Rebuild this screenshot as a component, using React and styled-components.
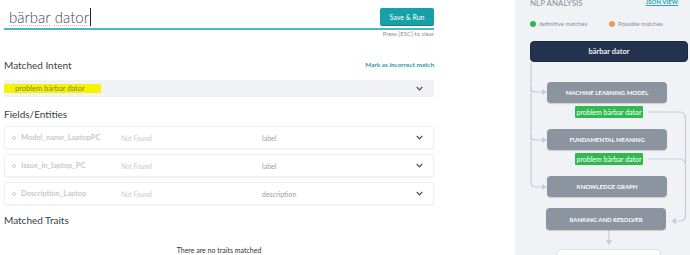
import React from "react";
import styled, { createGlobalStyle } from "styled-components";

const Global = createGlobalStyle`
  html, body { margin: 0; padding: 0; background: #fff; }
  body { font-family: Lato, "Noto Sans", sans-serif; overflow: hidden; }
  * { box-sizing: border-box; }
`;

const Page = styled.div`
  display: flex;
  width: 690px;
  height: 255px;
  overflow: hidden;
`;

const Main = styled.div`
  width: 515px;
  padding: 0 81px 0 4px;
  display: flex;
  flex-direction: column;
`;

const SearchRow = styled.div`
  height: 31px;
  display: flex;
  align-items: flex-start;
  justify-content: space-between;
  border-bottom: 2px solid #4db8c0;
  padding-left: 5px;
`;

const Query = styled.div`
  margin-top: 8px;
  height: 18px;
  font-size: 15px;
  line-height: 18px;
  font-weight: 300;
  color: #3d4858;
  display: flex;
  align-items: center;
`;

const Word = styled.span`
  text-decoration: underline dotted rgba(226, 90, 90, 0.55);
  text-decoration-thickness: 1px;
  text-underline-offset: 2px;
`;

const Caret = styled.span`
  display: inline-block;
  width: 1px;
  height: 18px;
  background: #222;
  margin-left: 1px;
`;

const RunButton = styled.button`
  margin-top: 8px;
  width: 54px;
  height: 17px;
  border: none;
  border-radius: 2px;
  background: #17a0a8;
  box-shadow: 0 1px 0 #10818a;
  color: #fff;
  font-family: Lato, sans-serif;
  font-size: 7px;
  padding: 0;
`;

const Hint = styled.div`
  text-align: right;
  font-size: 6px;
  color: #8a8f95;
  line-height: 8px;
`;

const SectionHead = styled.div`
  display: flex;
  justify-content: space-between;
  align-items: center;
  margin-top: ${(p) => p.$top}px;
  height: 12px;
`;

const Title = styled.div`
  font-size: 10px;
  color: #38404a;
  line-height: 12px;
`;

const LinkSmall = styled.a`
  font-size: 6.4px;
  font-weight: 700;
  color: #1f9aa3;
  text-decoration: none;
`;

const IntentBar = styled.div`
  margin-top: 9px;
  height: 18px;
  background: #f1f2f4;
  display: flex;
  align-items: center;
  justify-content: space-between;
  padding-right: 11px;
`;

const Highlight = styled.span`
  background: #f4f400;
  font-size: 7.5px;
  color: #80805a;
  height: 9px;
  line-height: 9px;
  padding: 0 16px 0 11px;
`;

const Chevron = () => (
  <svg width="7" height="5" viewBox="0 0 7 5">
    <polyline points="0.8,1 3.5,3.8 6.2,1" fill="none" stroke="#4a4f56" strokeWidth="1.2" />
  </svg>
);

const FieldList = styled.div`
  display: flex;
  flex-direction: column;
  gap: 5px;
  margin-top: 6px;
`;

const FieldRow = styled.div`
  height: 23px;
  background: #fff;
  border: 1px solid #f0f1f2;
  border-radius: 2px;
  box-shadow: 0 1px 2px rgba(0, 0, 0, 0.06);
  display: flex;
  align-items: center;
  padding-left: 7px;
  padding-right: 10px;
`;

const Dot = styled.span`
  width: 4px;
  height: 4px;
  border-radius: 50%;
  border: 1px solid #c9cdd2;
  margin-right: 5px;
`;

const FieldName = styled.span`
  width: 100px;
  font-size: 7.5px;
  font-weight: 700;
  color: #c6cacf;
`;

const NotFound = styled.span`
  width: 141px;
  font-size: 7px;
  font-style: italic;
  color: #c7cacf;
`;

const FieldType = styled.span`
  flex: 1;
  font-size: 7px;
  color: #9aa0a7;
`;

const Empty = styled.div`
  text-align: center;
  font-size: 7px;
  line-height: 9px;
  color: #333;
  margin-top: 20px;
`;

const Panel = styled.div`
  width: 175px;
  background: #f1f2f5;
  padding: 0 2px 0 15px;
  display: flex;
  flex-direction: column;
`;

const PanelHead = styled.div`
  display: flex;
  justify-content: space-between;
  align-items: flex-start;
  padding-right: 10px;
  margin-top: -2px;
  height: 10px;
`;

const PanelTitle = styled.div`
  font-size: 8px;
  color: #8b9097;
  line-height: 10px;
`;

const JsonLink = styled.a`
  font-size: 6px;
  font-weight: 700;
  color: #2aa7b0;
  text-decoration: underline;
  line-height: 7px;
`;

const Legend = styled.div`
  display: flex;
  align-items: center;
  margin-top: 12px;
  height: 8px;
`;

const LegendItem = styled.div`
  display: flex;
  align-items: center;
  gap: 3px;
  font-size: 6px;
  color: #8b9097;
  width: ${(p) => p.$w}px;
`;

const LegendDot = styled.span`
  width: 6px;
  height: 6px;
  border-radius: 50%;
  background: ${(p) => p.$c};
`;

const Flow = styled.div`
  position: relative;
  width: 158px;
  margin-top: 14px;
  display: flex;
  flex-direction: column;
  align-items: flex-start;
`;

const Lines = styled.svg`
  position: absolute;
  left: 0;
  top: 0;
  overflow: visible;
  pointer-events: none;
`;

const QueryNode = styled.div`
  width: 158px;
  height: 21px;
  background: #24334d;
  border: 1px solid #1b2840;
  border-radius: 4px;
  color: #fff;
  font-size: 7.5px;
  font-weight: 600;
  display: flex;
  align-items: center;
  justify-content: center;
  position: relative;
`;

const Stage = styled.div`
  position: relative;
  width: 120px;
  height: ${(p) => p.$h || 21}px;
  margin-top: ${(p) => p.$top}px;
  margin-left: ${(p) => p.$left || 17}px;
  background: #8c959f;
  border-radius: 4px;
  box-shadow: 0 1px 1px rgba(0, 0, 0, 0.15);
  color: #fff;
  font-size: 6px;
  font-weight: 700;
  text-transform: uppercase;
  display: flex;
  align-items: center;
  justify-content: center;
`;

const Tag = styled.div`
  position: relative;
  margin-top: 3px;
  margin-left: 45px;
  width: 68px;
  height: 12px;
  background: #2fba4f;
  border-radius: 1px;
  color: #fff;
  font-size: 7px;
  display: flex;
  align-items: center;
  justify-content: center;
`;

const Output = styled.div`
  margin-top: 19px;
  margin-left: 27px;
  width: 104px;
  height: 30px;
  background: #fff;
  border: 1px solid #dfe2e6;
  border-radius: 4px;
`;

const fields = [
  { name: "Model_name_LaptopPC", type: "label" },
  { name: "Issue_in_laptop_PC", type: "label" },
  { name: "Description_Laptop", type: "description" },
];

const stroke = "#c9cdd3";

const Arrow = ({ x, y, dir }) => {
  const pts =
    dir === "right"
      ? `${x - 5},${y - 3} ${x},${y} ${x - 5},${y + 3}`
      : dir === "left"
      ? `${x + 5},${y - 3} ${x},${y} ${x + 5},${y + 3}`
      : `${x - 3},${y - 5} ${x},${y} ${x + 3},${y - 5}`;
  return <polygon points={pts} fill={stroke} />;
};

export default function App() {
  return (
    <>
      <Global />
      <Page>
        <Main>
          <SearchRow>
            <Query>
              <Word>bärbar</Word>&nbsp;<Word>dator</Word>
              <Caret />
            </Query>
            <RunButton>Save &amp; Run</RunButton>
          </SearchRow>
          <Hint>Press [ESC] to clear</Hint>

          <SectionHead $top={21}>
            <Title>Matched Intent</Title>
            <LinkSmall>Mark as incorrect match</LinkSmall>
          </SectionHead>
          <IntentBar>
            <Highlight>problem bärbar dator</Highlight>
            <Chevron />
          </IntentBar>

          <SectionHead $top={11}>
            <Title>Fields/Entities</Title>
          </SectionHead>
          <FieldList>
            {fields.map((f) => (
              <FieldRow key={f.name}>
                <Dot />
                <FieldName>{f.name}</FieldName>
                <NotFound>Not Found</NotFound>
                <FieldType>{f.type}</FieldType>
                <Chevron />
              </FieldRow>
            ))}
          </FieldList>

          <SectionHead $top={9}>
            <Title>Matched Traits</Title>
          </SectionHead>
          <Empty>There are no traits matched</Empty>
        </Main>

        <Panel>
          <PanelHead>
            <PanelTitle>NLP ANALYSIS</PanelTitle>
            <JsonLink>JSON VIEW</JsonLink>
          </PanelHead>
          <Legend>
            <LegendItem $w={79}>
              <LegendDot $c="#2fba4f" />
              definitive matches
            </LegendItem>
            <LegendItem $w={70}>
              <LegendDot $c="#f2995c" />
              Possible matches
            </LegendItem>
          </Legend>

          <Flow>
            <Lines width="158" height="210">
              <g fill="none" stroke={stroke} strokeWidth="1.2">
                <path d="M1 21 V141 Q1 146 6 146 H16" />
                <path d="M1 46 Q1 51 6 51 H16" />
                <path d="M1 94 Q1 99 6 99 H16" />
                <path d="M118 71 H149 Q155.5 71 155.5 77 V174 Q155.5 180 150 180 H143" />
                <path d="M118 118 H149 Q155.5 118 155.5 124" />
                <path d="M79 189 V200" />
              </g>
              <Arrow x={17} y={51} dir="right" />
              <Arrow x={17} y={99} dir="right" />
              <Arrow x={17} y={146} dir="right" />
              <Arrow x={141} y={180} dir="left" />
              <Arrow x={79} y={204} dir="down" />
            </Lines>
            <QueryNode>bärbar dator</QueryNode>
            <Stage $top={20}>Machine Learning Model</Stage>
            <Tag>problem bärbar dator</Tag>
            <Stage $top={11}>Fundamental Meaning</Stage>
            <Tag>problem bärbar dator</Tag>
            <Stage $top={11}>Knowledge Graph</Stage>
            <Stage $top={11} $left={16} $h={22}>Ranking and Resolver</Stage>
            <Output />
          </Flow>
        </Panel>
      </Page>
    </>
  );
}
